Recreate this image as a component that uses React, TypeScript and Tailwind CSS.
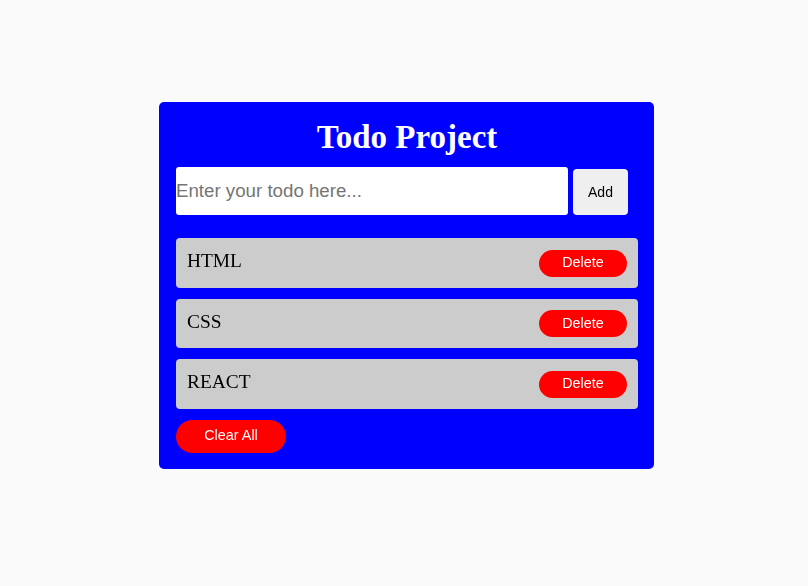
import { useState } from "react";

const SERIF = "font-['Liberation_Serif','Times_New_Roman',serif]";
const SANS = "font-['Liberation_Sans',Arial,sans-serif]";

export default function App() {
  const [todos, setTodos] = useState<string[]>(["HTML", "CSS", "REACT"]);
  const [text, setText] = useState("");

  const addTodo = () => {
    if (!text.trim()) return;
    setTodos([...todos, text.trim()]);
    setText("");
  };

  return (
    <div className="min-h-[586px] bg-[#fafafa] pt-[102px] pl-[159px]">
      <div className="w-[495px] rounded-[5px] bg-[#0000ff] pt-[16px] pb-[16px] pl-[17px] pr-[16px]">
        <h1 className={`${SERIF} text-center text-[33px] font-bold leading-[38px] text-white`}>
          Todo Project
        </h1>
        <div className="mt-[11px] flex items-center gap-[5px]">
          <input
            autoFocus
            value={text}
            onChange={(e) => setText(e.target.value)}
            placeholder="Enter your todo here..."
            className={`${SANS} h-[48px] w-[392px] rounded-[3px] bg-white px-0 text-[18.7px] text-black outline-none placeholder:text-[#757575]`}
          />
          <button
            onClick={addTodo}
            className={`${SANS} mt-[2px] h-[46px] w-[55px] rounded-[4px] bg-[#efefef] text-[14px] text-black`}
          >
            Add
          </button>
        </div>
        <ul className="mt-[23px] flex flex-col gap-[11px]">
          {todos.map((t, i) => (
            <li
              key={t + i}
              className="flex h-[49.5px] items-center justify-between rounded-[4px] bg-[#cccccc] pl-[11px] pr-[11px]"
            >
              <span className={`${SERIF} -mt-[4px] text-[19.4px] text-black`}>{t}</span>
              <button
                onClick={() => setTodos(todos.filter((_, j) => j !== i))}
                className={`${SANS} mt-[1px] h-[27px] w-[88px] rounded-full bg-[#ff0000] text-[14.4px] text-white`}
              >
                Delete
              </button>
            </li>
          ))}
        </ul>
        <button
          onClick={() => setTodos([])}
          className={`${SANS} mt-[11px] h-[33px] w-[110px] rounded-full bg-[#ff0000] text-[14.4px] text-white`}
        >
          Clear All
        </button>
      </div>
    </div>
  );
}
